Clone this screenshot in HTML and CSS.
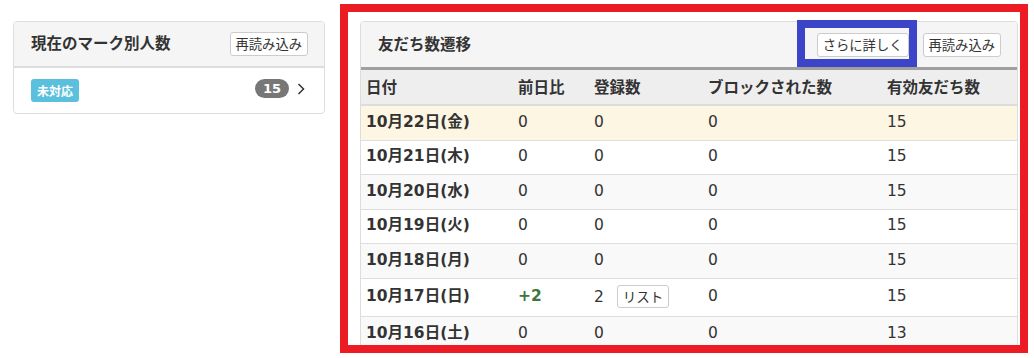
FILE: index.html
```html
<!DOCTYPE html>
<html lang="ja">
<head>
    <meta charset="UTF-8">
    <meta name="viewport" content="width=device-width, initial-scale=1.0">
    <title>友だち数遷移</title>
    <link rel="stylesheet" href="styles.css">
</head>
<body>
    <div class="page">
        <div class="panel panel-marks">
            <div class="panel-heading">
                <h3 class="panel-title">現在のマーク別人数</h3>
                <div class="panel-tools">
                    <button class="btn">再読み込み</button>
                </div>
            </div>
            <div class="panel-body">
                <span class="label-info">未対応</span>
                <span class="count">
                    <span class="badge">15</span>
                    <svg class="chevron" width="8" height="12" viewBox="0 0 8 12">
                        <polyline points="1.5,1 6.5,6 1.5,11" fill="none" stroke="#333" stroke-width="1.5"/>
                    </svg>
                </span>
            </div>
        </div>

        <div class="panel panel-friends">
            <div class="panel-heading">
                <h3 class="panel-title">友だち数遷移</h3>
                <div class="panel-tools">
                    <button class="btn">さらに詳しく</button>
                    <button class="btn">再読み込み</button>
                </div>
            </div>
            <table class="stats">
                <colgroup>
                    <col class="col-date">
                    <col class="col-diff">
                    <col class="col-reg">
                    <col class="col-block">
                    <col class="col-total">
                </colgroup>
                <thead>
                    <tr>
                        <th>日付</th>
                        <th>前日比</th>
                        <th>登録数</th>
                        <th>ブロックされた数</th>
                        <th>有効友だち数</th>
                    </tr>
                </thead>
                <tbody>
                    <tr class="today">
                        <th>10月22日(金)</th><td>0</td><td>0</td><td>0</td><td>15</td>
                    </tr>
                    <tr>
                        <th>10月21日(木)</th><td>0</td><td>0</td><td>0</td><td>15</td>
                    </tr>
                    <tr>
                        <th>10月20日(水)</th><td>0</td><td>0</td><td>0</td><td>15</td>
                    </tr>
                    <tr>
                        <th>10月19日(火)</th><td>0</td><td>0</td><td>0</td><td>15</td>
                    </tr>
                    <tr>
                        <th>10月18日(月)</th><td>0</td><td>0</td><td>0</td><td>15</td>
                    </tr>
                    <tr>
                        <th>10月17日(日)</th><td class="plus">+2</td><td>2 <button class="btn btn-list">リスト</button></td><td>0</td><td>15</td>
                    </tr>
                    <tr>
                        <th>10月16日(土)</th><td>0</td><td>0</td><td>0</td><td>13</td>
                    </tr>
                </tbody>
            </table>
        </div>

        <!-- annotation frames drawn over the screenshot -->
        <div class="mark mark-red"></div>
        <div class="mark mark-blue"></div>
    </div>
</body>
</html>
```

FILE: styles.css
```css
body {
    margin: 0;
    font-family: "DejaVu Sans", "Noto Sans CJK JP", sans-serif;
    color: #333;
    background: #fff;
}
.page {
    position: relative;
    display: flex;
    align-items: flex-start;
    gap: 35px;
    height: 353px;
    overflow: hidden;
    padding: 21px 0 0 13px;
    box-sizing: border-box;
}
.panel {
    border: 1px solid #ddd;
    border-radius: 4px;
    background: #fff;
    overflow: hidden;
}
.panel-marks {
    width: 312px;
    box-sizing: border-box;
}
.panel-friends {
    width: 658px;
    box-sizing: border-box;
}
.panel-heading {
    display: flex;
    align-items: center;
    justify-content: space-between;
    height: 44px;
    padding: 0 16px 0 17px;
    background: #f5f5f5;
    border-bottom: 2px solid #ddd;
}
.panel-friends .panel-heading {
    height: 45px;
    border-bottom: 3px solid #a0a0a0;
}
.panel-title {
    margin: 0 0 4px;
    font-size: 15.5px;
    font-weight: bold;
    font-family: "Noto Sans CJK JP", sans-serif;
}
.panel-tools {
    display: flex;
    gap: 14px;
}
.btn {
    height: 24px;
    padding: 0 5px;
    border: 1px solid #ccc;
    border-radius: 3px;
    background: #fff;
    color: #333;
    font-family: "Noto Sans CJK JP", sans-serif;
    font-size: 13.3px;
    line-height: 22px;
}
.panel-body {
    display: flex;
    align-items: center;
    justify-content: space-between;
    height: 45px;
    padding: 0 19px 0 17px;
}
.label-info {
    display: inline-block;
    height: 23px;
    padding: 0 6px;
    border-radius: 3px;
    background: #5bc0de;
    color: #fff;
    font-family: "Noto Sans CJK JP", sans-serif;
    font-size: 12px;
    font-weight: bold;
    line-height: 23px;
}
.count {
    display: flex;
    align-items: center;
    gap: 8px;
    margin-top: -4px;
}
.badge {
    display: inline-block;
    width: 34px;
    height: 19px;
    border-radius: 10px;
    background: #777;
    color: #fff;
    font-size: 13px;
    font-weight: bold;
    line-height: 19px;
    text-align: center;
}
.chevron {
    display: block;
}
.stats {
    width: 100%;
    border-collapse: collapse;
    table-layout: fixed;
    font-size: 15.5px;
}
.col-date { width: 151px; }
.col-diff { width: 76px; }
.col-reg { width: 114px; }
.col-block { width: 179px; }
.col-total { width: 136px; }
.stats th,
.stats td {
    padding: 6.5px 6px 8px 5px;
    line-height: 19px;
    text-align: left;
    white-space: nowrap;
}
.stats td {
    padding-left: 6px;
}
.stats thead th {
    height: 33px;
    padding: 0 6px 1px;
    background: #eee;
    border-bottom: 2px solid #ddd;
    font-family: "Noto Sans CJK JP", sans-serif;
    font-size: 15.5px;
}
.stats thead th:first-child {
    padding-left: 5px;
}
.stats tbody tr {
    border-top: 1px solid #ddd;
}
.stats tbody tr:first-child {
    border-top: none;
}
.stats tbody tr:nth-child(odd) {
    background: #f9f9f9;
}
.stats tbody tr.today {
    background: #fcf6e3;
}
.stats tbody th {
    font-weight: bold;
}
.plus {
    color: #3c763d;
    font-weight: bold;
}
.btn-list {
    height: 23px;
    margin-left: 8px;
    padding: 0 5px;
    font-size: 13.5px;
    line-height: 21px;
    vertical-align: baseline;
}
.mark {
    position: absolute;
    box-sizing: border-box;
    border-style: solid;
    border-width: 8px;
    pointer-events: none;
}
.mark-red {
    left: 340px;
    top: 4px;
    width: 688px;
    height: 349px;
    border-color: #ed1c24;
}
.mark-blue {
    left: 797px;
    top: 20px;
    width: 120px;
    height: 47px;
    border-color: #3c44c8;
}
```
